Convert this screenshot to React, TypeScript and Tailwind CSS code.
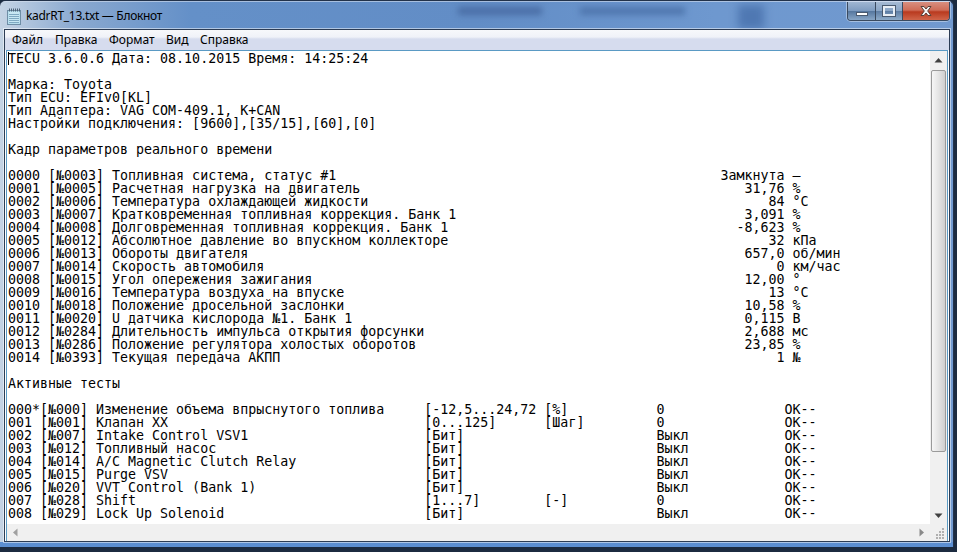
import React from "react";

const pid = (a: string, b: string) => `${a} [№${b}] `;
const param = (a: string, b: string, name: string, val: string, unit: string) =>
  (pid(a, b) + name).padEnd(97 - val.length, " ") + val + " " + unit;
const test = (a: string, name: string, range: string, u: string, v: string) =>
  (a + name).padEnd(52, " ") + range.padEnd(15, " ") + u.padEnd(14, " ") + v.padEnd(16, " ") + "OK--";

const lines: string[] = [
  "TECU 3.6.0.6 Дата: 08.10.2015 Время: 14:25:24",
  "",
  "Марка: Toyota",
  "Тип ECU: EFIv0[KL]",
  "Тип Адаптера: VAG COM-409.1, K+CAN",
  "Настройки подключения: [9600],[35/15],[60],[0]",
  "",
  "Кадр параметров реального времени",
  "",
  param("0000", "0003", "Топливная система, статус #1", "Замкнута", "–"),
  param("0001", "0005", "Расчетная нагрузка на двигатель", "31,76", "%"),
  param("0002", "0006", "Температура охлаждающей жидкости", "84", "°C"),
  param("0003", "0007", "Кратковременная топливная коррекция. Банк 1", "3,091", "%"),
  param("0004", "0008", "Долговременная топливная коррекция. Банк 1", "-8,623", "%"),
  param("0005", "0012", "Абсолютное давление во впускном коллекторе", "32", "кПа"),
  param("0006", "0013", "Обороты двигателя", "657,0", "об/мин"),
  param("0007", "0014", "Скорость автомобиля", "0", "км/час"),
  param("0008", "0015", "Угол опережения зажигания", "12,00", "°"),
  param("0009", "0016", "Температура воздуха на впуске", "13", "°C"),
  param("0010", "0018", "Положение дросельной заслонки", "10,58", "%"),
  param("0011", "0020", "U датчика кислорода №1. Банк 1", "0,115", "В"),
  param("0012", "0284", "Длительность импульса открытия форсунки", "2,688", "мс"),
  param("0013", "0286", "Положение регулятора холостых оборотов", "23,85", "%"),
  param("0014", "0393", "Текущая передача АКПП", "1", "№"),
  "",
  "Активные тесты",
  "",
  test("000*[№000] ", "Изменение объема впрыснутого топлива", "[-12,5...24,72", "[%]", "0"),
  test("001 [№001] ", "Клапан XX", "[0...125]", "[Шаг]", "0"),
  test("002 [№007] ", "Intake Control VSV1", "[Бит]", "", "Выкл"),
  test("003 [№012] ", "Топливный насос", "[Бит]", "", "Выкл"),
  test("004 [№014] ", "A/C Magnetic Clutch Relay", "[Бит]", "", "Выкл"),
  test("005 [№015] ", "Purge VSV", "[Бит]", "", "Выкл"),
  test("006 [№020] ", "VVT Control (Bank 1)", "[Бит]", "", "Выкл"),
  test("007 [№028] ", "Shift", "[1...7]", "[-]", "0"),
  test("008 [№029] ", "Lock Up Solenoid", "[Бит]", "", "Выкл"),
];

function NotepadIcon() {
  return (
    <svg width="16" height="17" viewBox="0 0 16 17" className="shrink-0">
      <rect x="1.5" y="2.5" width="13" height="14" fill="#a9d6e8" stroke="#6f8ea6" />
      <rect x="2.5" y="3.5" width="11" height="12" fill="#c8e8f4" />
      {[6, 8, 10, 12, 14].map((y) => (
        <line key={y} x1="3" x2="13" y1={y + 0.5} y2={y + 0.5} stroke="#7fa9c2" />
      ))}
      {[3, 5, 7, 9, 11, 13].map((x) => (
        <line key={x} x1={x + 0.5} x2={x + 0.5} y1="0.5" y2="3.5" stroke="#4f6478" />
      ))}
    </svg>
  );
}

const Tri = ({ d, fill }: { d: string; fill: string }) => (
  <svg width="9" height="9" viewBox="0 0 9 9" className="block">
    <path d={d} fill={fill} />
  </svg>
);

export default function App() {
  return (
    <div className="relative flex h-[552px] w-[957px] flex-col overflow-hidden bg-[#1c2b40] font-['Noto_Sans',sans-serif]">
      <div className="relative mr-[3px] flex h-[547px] flex-col overflow-hidden rounded-t-[6px] border-t border-r border-[#22324a] bg-[linear-gradient(90deg,#c4d3e4_0%,#8aa9d0_8%,#6490c8_20%,#628dc6_50%,#6e98cf_75%,#7199cf_100%)]">
        {/* blurred desktop behind the glass */}
        <div className="absolute left-[458px] top-[6px] h-[8px] w-[84px] bg-[#4a6ea6] blur-[3px]" />
        <div className="absolute left-[580px] top-[6px] h-[8px] w-[105px] bg-[#4f76ae] blur-[3px]" />
        <div className="absolute left-[738px] top-[4px] h-[24px] w-[26px] bg-[#4f78b2] blur-[4px]" />

        <div className="relative flex h-[28px] shrink-0 items-start border-t border-[#d5e0ee]/60">
          <div className="ml-[6px] mt-[6px]">
            <NotepadIcon />
          </div>
          <span className="ml-[4px] mt-[5px] whitespace-pre text-[12px] leading-[18px] tracking-[-0.3px] text-black">kadrRT_13.txt — Блокнот</span>
          <div className="ml-auto mr-[3px] flex h-[19px] overflow-hidden rounded-b-[4px] border border-t-0 border-[#3a4a60] shadow-[0_0_0_1px_#ffffff60]">
            <div className="flex w-[28px] items-end justify-center border-r border-[#3a4a60] bg-[linear-gradient(180deg,#9fb6d2_0%,#7f9cc0_48%,#56779f_52%,#88a6c6_100%)] pb-[4px]">
              <div className="h-[4px] w-[12px] border border-[#4a5a70] bg-white" />
            </div>
            <div className="flex w-[27px] items-center justify-center border-r border-[#3a4a60] bg-[linear-gradient(180deg,#a5bad3_0%,#8ba6c6_48%,#5e7ea5_52%,#8eabc9_100%)]">
              <div className="h-[10px] w-[12px] border-2 border-[#e8eef5] outline-1 outline-[#4a5a70]" />
            </div>
            <div className="flex w-[46px] items-center justify-center bg-[linear-gradient(180deg,#d88f80_0%,#cf6d58_45%,#b93a1f_55%,#d0654a_100%)]">
              <svg width="14" height="12" viewBox="0 0 14 12">
                <path d="M2 1.5h3L7 4l2-2.5h3L8.700 6 12 10.500H9L7 8l-2 2.500H2L5.300 6z" fill="#f4f4f4" stroke="#5a4038" strokeWidth="1" />
              </svg>
            </div>
          </div>
        </div>

        <div className="relative ml-[4px] mr-[3px] flex flex-1 flex-col border border-[#2c3c54] bg-white shadow-[0_0_0_1px_#ffffff80]">
          <div className="flex h-[20px] shrink-0 items-center bg-[linear-gradient(180deg,#f7f8fb_0%,#f0f2f8_35%,#d6dcee_45%,#d6dcee_100%)] text-[12px] leading-[18px] text-black">
            <span className="ml-[7px] w-[43px]">Файл</span>
            <span className="w-[54px]">Правка</span>
            <span className="w-[57px]">Формат</span>
            <span className="w-[34px]">Вид</span>
            <span>Справка</span>
          </div>
          <div className="ml-px mr-px flex min-h-0 flex-1 flex-col border-t border-l border-r border-[#5a9ac4]">
            <div className="flex min-h-0 flex-1">
              <div className="relative min-w-0 flex-1 overflow-hidden bg-white pl-[1px] pt-[1px]">
                <pre className="font-['DejaVu_Sans_Mono',monospace] text-[13.3px] leading-[13px] text-black">
                  {lines.join("\n")}
                </pre>
                <div className="absolute left-[1px] top-[1px] h-[13px] w-px bg-black" />
              </div>
              <div className="flex w-[17px] shrink-0 flex-col items-center bg-[#f0f0f0]">
                <div className="flex h-[19px] items-center justify-center">
                  <Tri d="M4.500 2 8.500 6.500H0.500z" fill="#404040" />
                </div>
                <div className="h-[382px] w-[15px] rounded-[2px] border border-[#9a9a9a] bg-[linear-gradient(90deg,#f6f6f6_0%,#e4e4e4_50%,#cfcfcf_100%)]" />
                <div className="mt-auto flex h-[17px] items-center justify-center">
                  <Tri d="M0.500 2.500H8.500L4.500 7z" fill="#404040" />
                </div>
              </div>
            </div>
            <div className="flex h-[17px] shrink-0 items-center bg-[#f0f0f0]">
              <div className="flex w-[17px] justify-center">
                <Tri d="M2 4.500 6.500 0.500V8.500z" fill="#a0a0a0" />
              </div>
              <div className="flex-1" />
              <div className="flex w-[17px] justify-center">
                <Tri d="M2.500 0.500 7 4.500 2.500 8.500z" fill="#8a8a8a" />
              </div>
              <div className="flex h-[17px] w-[17px] items-end justify-end pb-[2px] pr-[2px]">
                <svg width="11" height="11" viewBox="0 0 11 11">
                  {[[8, 0], [8, 3], [8, 6], [5, 3], [5, 6], [2, 6], [8, 9], [5, 9], [2, 9]].map(([x, y]) => (
                    <rect key={`${x}-${y}`} x={x} y={y} width="2" height="2" fill="#b0b0b0" />
                  ))}
                </svg>
              </div>
            </div>
          </div>
        </div>
        <div className="h-[5px] shrink-0 bg-[#5c8fd2]" />
      </div>
    </div>
  );
}
